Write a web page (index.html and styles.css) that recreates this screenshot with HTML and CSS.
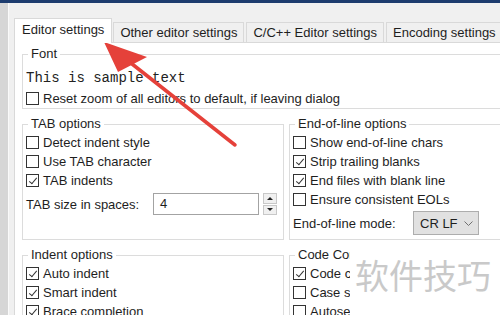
FILE: index.html
```html
<!DOCTYPE html>
<html>
<head>
<meta charset="utf-8">
<link rel="stylesheet" href="styles.css">
</head>
<body>
<div class="topbar"></div>
<div class="window">
  <div class="side"></div>
  <div class="main">
    <div class="tabs">
      <div class="tab active">Editor settings</div>
      <div class="tab">Other editor settings</div>
      <div class="tab">C/C++ Editor settings</div>
      <div class="tab">Encoding settings</div>
    </div>
    <div class="panel">
      <fieldset class="group font">
        <legend>Font</legend>
        <div class="sample">This is sample text</div>
        <div class="row"><span class="cb"></span>Reset zoom of all editors to default, if leaving dialog</div>
      </fieldset>
      <div class="grid">
        <fieldset class="group">
          <legend>TAB options</legend>
          <div class="row"><span class="cb"></span>Detect indent style</div>
          <div class="row"><span class="cb"></span>Use TAB character</div>
          <div class="row"><span class="cb on"></span>TAB indents</div>
          <div class="row field">
            <span class="lbl tablbl">TAB size in spaces:</span>
            <span class="input">4</span>
            <span class="spinner"><span class="sbtn up"></span><span class="sbtn down"></span></span>
          </div>
        </fieldset>
        <fieldset class="group">
          <legend>End-of-line options</legend>
          <div class="row"><span class="cb"></span>Show end-of-line chars</div>
          <div class="row"><span class="cb on"></span>Strip trailing blanks</div>
          <div class="row"><span class="cb on"></span>End files with blank line</div>
          <div class="row"><span class="cb"></span>Ensure consistent EOLs</div>
          <div class="row field">
            <span class="lbl eollbl">End-of-line mode:</span>
            <span class="combo">CR LF<svg class="chev" width="9" height="5" viewBox="0 0 9 5"><polyline points="0.5,0.5 4.5,4.5 8.5,0.5" fill="none" stroke="#707070" stroke-width="1"/></svg></span>
          </div>
        </fieldset>
        <fieldset class="group">
          <legend>Indent options</legend>
          <div class="row"><span class="cb on"></span>Auto indent</div>
          <div class="row"><span class="cb on"></span>Smart indent</div>
          <div class="row"><span class="cb on"></span>Brace completion</div>
        </fieldset>
        <fieldset class="group">
          <legend>Code Completion</legend>
          <div class="row"><span class="cb on"></span>Code completion</div>
          <div class="row"><span class="cb"></span>Case sensitive</div>
          <div class="row"><span class="cb"></span>Autoselect single entry</div>
        </fieldset>
      </div>
    </div>
  </div>
</div>
<div class="wm">软件技巧</div>
<svg class="arrow" width="500" height="315" viewBox="0 0 500 315">
  <line x1="235" y1="145" x2="127" y2="60" stroke="#e5413a" stroke-width="3.5" stroke-linecap="round"/>
  <polygon points="104,42 147,57 118,72" fill="#e5413a"/>
</svg>
</body>
</html>
```

FILE: styles.css
```css
html, body {
  margin: 0;
  padding: 0;
}
body {
  width: 500px;
  height: 315px;
  overflow: hidden;
  position: relative;
  background: #f0f0f0;
  font-family: "Liberation Sans", Arial, sans-serif;
  font-size: 13px;
  color: #1e1e1e;
}
.topbar {
  height: 3px;
  background: #1d3c6e;
}
.window {
  display: flex;
  height: 312px;
}
.side {
  flex: none;
  width: 8px;
  background: #d6d6d6;
  border-right: 1px solid #fafafa;
}
.main {
  flex: none;
  width: 540px;
  padding: 15px 0 0 5px;
}
.tabs {
  display: flex;
  align-items: flex-end;
  height: 24px;
  white-space: nowrap;
}
.tab {
  box-sizing: border-box;
  height: 20px;
  line-height: 19px;
  padding: 0 6px;
  margin-right: 2px;
  border: 1px solid #d9d9d9;
  border-bottom: 0;
  background: #f0f0f0;
}
.tab.active {
  position: relative;
  z-index: 1;
  height: 25px;
  line-height: 22px;
  padding: 0 7px;
  margin-right: 1px;
  margin-bottom: -1px;
  background: #fff;
}
.panel {
  height: 300px;
  background: #fff;
  border: 1px solid #d9d9d9;
  padding: 4px 0 0 7px;
}
.group {
  margin: 0;
  min-width: 0;
  padding: 2px 4px 4px 3px;
  border: 1px solid #dcdcdc;
}
.group legend {
  padding: 0 3px;
  margin-left: 2px;
  line-height: 14px;
}
.group.font {
  padding-top: 6px;
  padding-bottom: 0;
}
.sample {
  height: 22px;
  line-height: 22px;
  font-family: "Liberation Mono", "Courier New", monospace;
  font-size: 14px;
  color: #222;
}
.grid {
  display: grid;
  grid-template-columns: 262px 262px;
  column-gap: 5px;
  row-gap: 8px;
  margin-top: 8px;
}
.row {
  display: flex;
  align-items: center;
  height: 19px;
  white-space: nowrap;
}
.cb {
  flex: none;
  position: relative;
  box-sizing: border-box;
  width: 13px;
  height: 13px;
  margin-right: 4px;
  border: 1px solid #333;
  background: #fff;
}
.cb.on::after {
  content: "";
  position: absolute;
  left: 3.5px;
  top: 0.5px;
  width: 3px;
  height: 7px;
  border: solid #333;
  border-width: 0 1.2px 1.2px 0;
  transform: rotate(40deg);
}
.row.field {
  height: 24px;
  margin-top: 2px;
}
.lbl {
  flex: none;
}
.tablbl {
  width: 127px;
}
.eollbl {
  width: 120px;
}
.input {
  box-sizing: border-box;
  width: 106px;
  height: 22px;
  line-height: 20px;
  padding-left: 6px;
  border: 1px solid #a3a3a3;
  background: #fff;
  margin-right: 4px;
}
.spinner {
  display: flex;
  flex-direction: column;
  gap: 1px;
  width: 14px;
  height: 22px;
}
.sbtn {
  flex: 1;
  box-sizing: border-box;
  border: 1px solid #c8c8c8;
  background: #f0f0f0;
  display: flex;
  align-items: center;
  justify-content: center;
}
.sbtn.up::before {
  content: "";
  border-left: 3px solid transparent;
  border-right: 3px solid transparent;
  border-bottom: 3px solid #222;
}
.sbtn.down::before {
  content: "";
  border-left: 3px solid transparent;
  border-right: 3px solid transparent;
  border-top: 3px solid #222;
}
.combo {
  box-sizing: border-box;
  width: 66px;
  height: 24px;
  display: flex;
  align-items: center;
  justify-content: space-between;
  padding: 0 5px 0 6px;
  background: #e1e1e1;
  border: 1px solid #adadad;
}
.wm {
  position: absolute;
  left: 350px;
  top: 245px;
  right: 0;
  bottom: 0;
  background: #fff;
  padding: 13px 0 0 5px;
  font-family: "Noto Sans CJK SC", sans-serif;
  font-size: 34px;
  line-height: 34px;
  color: #c9c9c9;
  white-space: nowrap;
}
.arrow {
  position: absolute;
  left: 0;
  top: 0;
  pointer-events: none;
}
```
